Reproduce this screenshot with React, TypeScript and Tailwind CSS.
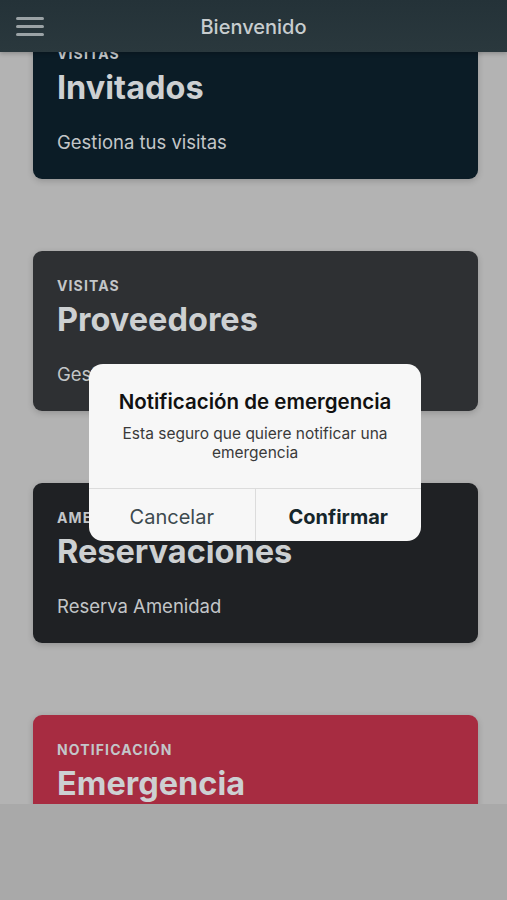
import React from "react";

type CardProps = { label: string; title: string; subtitle?: string; bg: string };

function Card({ label, title, subtitle, bg }: CardProps) {
  return (
    <div className={`h-[160px] w-[445px] shrink-0 rounded-[9px] px-[24px] pt-[26px] shadow-[0_2px_6px_rgba(0,0,0,0.18)] ${bg}`}>
      <div className="text-[14px] font-bold leading-[18px] tracking-[0.08em] text-[#c3c6c9]">{label}</div>
      <div className="mt-[6px] text-[32.5px] font-bold leading-[38px] text-[#cdd0d2]">{title}</div>
      {subtitle && <div className="mt-[23px] text-[18.5px] leading-[24px] text-[#c3c6c8]">{subtitle}</div>}
    </div>
  );
}

export default function App() {
  return (
    <div className="relative h-[900px] w-[507px] overflow-hidden bg-[#b3b3b3]" style={{ fontFamily: "Inter, 'Noto Sans', sans-serif" }}>
      <div className="h-[804px] overflow-hidden">
        <div className="flex flex-col gap-[72px] pl-[33px] pt-[19px]">
          <Card label="VISITAS" title="Invitados" subtitle="Gestiona tus visitas" bg="bg-[#0b1c26]" />
          <Card label="VISITAS" title="Proveedores" subtitle="Gestiona tus proveedores" bg="bg-[#2e3033]" />
          <Card label="AMENIDADES" title="Reservaciones" subtitle="Reserva Amenidad" bg="bg-[#1f2124]" />
          <Card label="NOTIFICACIÓN" title="Emergencia" bg="bg-[#a72c41]" />
        </div>
      </div>
      <div className="h-[96px] bg-[#a9a9a9]" />

      <div className="absolute left-0 top-0 flex h-[52px] w-full items-center bg-gradient-to-b from-[#243238] to-[#2a383d] shadow-[0_2px_4px_rgba(0,0,0,0.2)]">
        <div className="ml-[16px] flex w-[28px] flex-col gap-[5px]">
          <div className="h-[3px] rounded-full bg-[#9ba3a6]" />
          <div className="h-[3px] rounded-full bg-[#9ba3a6]" />
          <div className="h-[3px] rounded-full bg-[#9ba3a6]" />
        </div>
        <div className="absolute left-0 right-0 top-[13px] text-center text-[20px] font-medium leading-[28px] text-[#c8cdcf]">Bienvenido</div>
      </div>

      <div className="absolute left-[89px] top-[364px] w-[332px] overflow-hidden rounded-[14px] bg-[#f7f7f7]">
        <div className="px-[16px] pb-[26px] pt-[24px] text-center">
          <div className="text-[20.5px] font-semibold leading-[28px] text-[#111111]">Notificación de emergencia</div>
          <div className="mt-[8px] text-[15.5px] leading-[19px] text-[#3a3a3a]">
            Esta seguro que quiere notificar una
            <br />
            emergencia
          </div>
        </div>
        <div className="flex h-[53px] border-t border-[#dcdcdc]">
          <div className="flex flex-1 items-center justify-center border-r border-[#dcdcdc] pt-[4px] text-[20px] text-[#3d4a4f]">Cancelar</div>
          <div className="flex flex-1 items-center justify-center pt-[4px] text-[20px] font-bold text-[#15262b]">Confirmar</div>
        </div>
      </div>
    </div>
  );
}
